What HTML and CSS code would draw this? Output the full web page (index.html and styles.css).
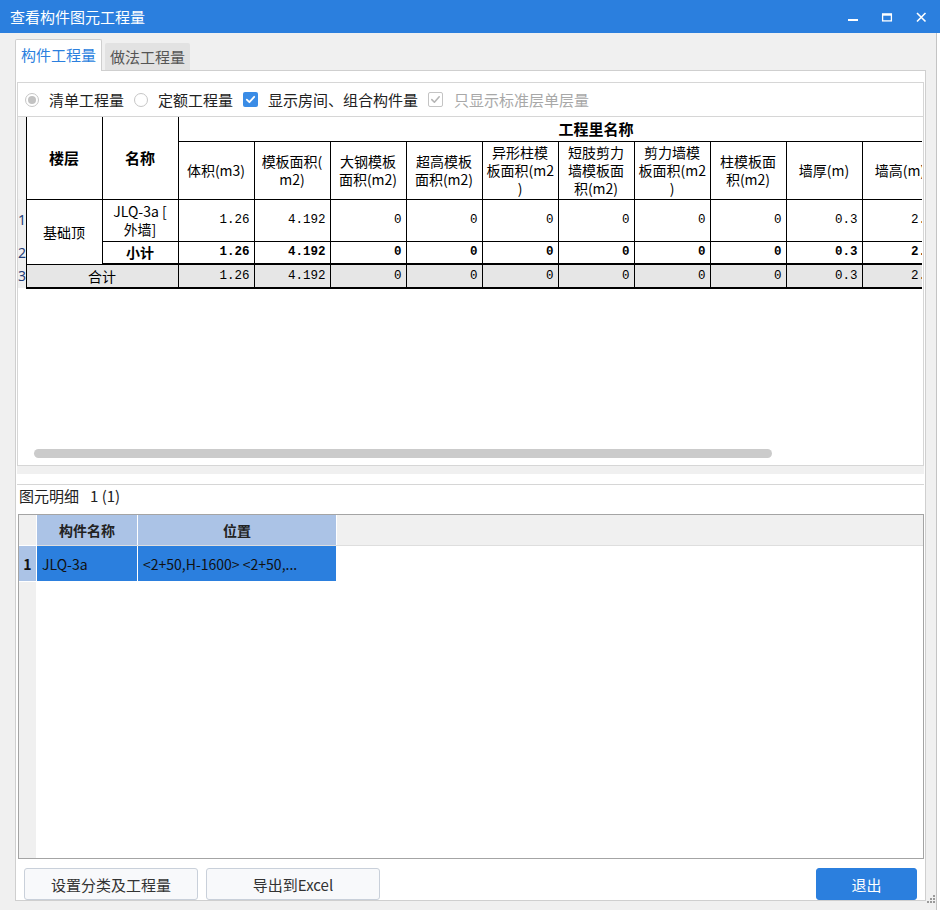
FILE: index.html
```html
<!DOCTYPE html>
<html lang="zh">
<head>
<meta charset="utf-8">
<title>查看构件图元工程量</title>
<link rel="stylesheet" href="styles.css">
</head>
<body>
<div class="titlebar">
  <div class="title">查看构件图元工程量</div>
  <div class="controls">
    <div class="wbtn"><svg width="12" height="12" viewBox="0 0 12 12"><rect x="1" y="8" width="10" height="2" fill="#fff"/></svg></div>
    <div class="wbtn"><svg width="12" height="12" viewBox="0 0 12 12"><rect x="1.6" y="3.1" width="8.8" height="6.8" fill="none" stroke="#fff" stroke-width="1.3"/><rect x="1" y="2.5" width="10" height="2.2" fill="#fff"/></svg></div>
    <div class="wbtn"><svg width="12" height="12" viewBox="0 0 12 12"><path d="M2 2 L10.5 10.5 M10.5 2 L2 10.5" stroke="#fff" stroke-width="1.6" fill="none"/></svg></div>
  </div>
</div>
<div class="frame">
  <div class="tabs">
    <div class="tab active">构件工程量</div>
    <div class="tab inactive">做法工程量</div>
  </div>
  <div class="panel">
    <div class="upper">
      <div class="opts">
        <label class="opt"><span class="radio checked"></span><span>清单工程量</span></label>
        <label class="opt"><span class="radio"></span><span>定额工程量</span></label>
        <label class="opt"><span class="cbox on"><svg width="15" height="15" viewBox="0 0 15 15"><path d="M3.8 7.6 L6.4 10.2 L11.2 4.8" stroke="#fff" stroke-width="1.8" fill="none" stroke-linecap="round" stroke-linejoin="round"/></svg></span><span>显示房间、组合构件量</span></label>
        <label class="opt dis"><span class="cbox off"><svg width="13" height="13" viewBox="0 0 13 13"><path d="M2.8 6.6 L5.4 9.2 L10.2 3.8" stroke="#b5b5b5" stroke-width="1.6" fill="none" stroke-linecap="round" stroke-linejoin="round"/></svg></span><span>只显示标准层单层量</span></label>
      </div>
      <div class="gridarea">
        <div class="tablewrap">
          <table class="grid">
            <colgroup>
              <col class="cg">
              <col class="cc"><col class="cc"><col class="cc"><col class="cc"><col class="cc"><col class="cc"><col class="cc"><col class="cc"><col class="cc"><col class="cc"><col class="cc"><col class="cc"><col class="cc">
            </colgroup>
            <tr class="h1">
              <td class="gut gh"></td>
              <th class="b top" rowspan="2">楼层</th>
              <th class="b top" rowspan="2">名称</th>
              <th class="b top" colspan="11">工程里名称</th>
            </tr>
            <tr class="h2">
              <td class="gut gh"></td>
              <th>体积(m3)</th>
              <th>模板面积(<br>m2)</th>
              <th>大钢模板<br>面积(m2)</th>
              <th>超高模板<br>面积(m2)</th>
              <th>异形柱模<br>板面积(m2<br>)</th>
              <th>短肢剪力<br>墙模板面<br>积(m2)</th>
              <th>剪力墙模<br>板面积(m2<br>)</th>
              <th>柱模板面<br>积(m2)</th>
              <th>墙厚(m)</th>
              <th>墙高(m)</th>
              <th></th>
            </tr>
            <tr class="r1">
              <td class="gut">1</td>
              <td rowspan="2" class="floor">基础顶</td>
              <td class="name">JLQ-3a [<br>外墙]</td>
              <td class="n">1.26</td><td class="n">4.192</td><td class="n">0</td><td class="n">0</td><td class="n">0</td><td class="n">0</td><td class="n">0</td><td class="n">0</td><td class="n">0.3</td><td class="n">2.1</td><td class="n"></td>
            </tr>
            <tr class="r2">
              <td class="gut">2</td>
              <td class="sub">小计</td>
              <td class="n">1.26</td><td class="n">4.192</td><td class="n">0</td><td class="n">0</td><td class="n">0</td><td class="n">0</td><td class="n">0</td><td class="n">0</td><td class="n">0.3</td><td class="n">2.1</td><td class="n"></td>
            </tr>
            <tr class="r3">
              <td class="gut">3</td>
              <td colspan="2" class="total">合计</td>
              <td class="n">1.26</td><td class="n">4.192</td><td class="n">0</td><td class="n">0</td><td class="n">0</td><td class="n">0</td><td class="n">0</td><td class="n">0</td><td class="n">0.3</td><td class="n">2.1</td><td class="n"></td>
            </tr>
          </table>
        </div>
        <div class="hscroll"></div>
      </div>
    </div>
    <div class="split"></div>
    <div class="lower">
      <div class="label"><span>图元明细</span><span class="cnt">1 (1)</span></div>
      <div class="lgrid">
        <div class="lgutter">
          <div class="lg-h"></div>
          <div class="lg-1">1</div>
        </div>
        <div class="lmain">
          <div class="lhead">
            <div class="lhc c1">构件名称</div>
            <div class="lhc c2">位置</div>
          </div>
          <div class="lrow">
            <div class="lc c1">JLQ-3a</div>
            <div class="lc c2">&lt;2+50,H-1600&gt; &lt;2+50,...</div>
          </div>
        </div>
      </div>
    </div>
    <div class="btns">
      <div class="btn w">设置分类及工程量</div>
      <div class="btn w">导出到Excel</div>
      <div class="btn primary">退出</div>
    </div>
  </div>
</div>
<div class="grip"><svg width="11" height="10" viewBox="0 0 11 10"><rect x="8" y="0" width="2" height="2" fill="#9a9a9a"/><rect x="5" y="3" width="2" height="2" fill="#9a9a9a"/><rect x="8" y="3" width="2" height="2" fill="#9a9a9a"/><rect x="2" y="6" width="2" height="2" fill="#9a9a9a"/><rect x="5" y="6" width="2" height="2" fill="#9a9a9a"/><rect x="8" y="6" width="2" height="2" fill="#9a9a9a"/></svg></div>
</body>
</html>
```

FILE: styles.css
```css
html, body {
  margin: 0;
  padding: 0;
}
body {
  width: 940px;
  height: 910px;
  overflow: hidden;
  background: #ffffff;
  font-family: "Noto Sans CJK SC", "Noto Sans", sans-serif;
  position: relative;
  color: #222;
}
.titlebar {
  width: 940px;
  height: 33px;
  background: #2b7fde;
  display: flex;
  align-items: center;
  color: #fff;
  font-size: 15px;
  box-sizing: border-box;
  padding-left: 10px;
}
.title {
  flex: 1;
  line-height: 20px;
}
.controls {
  display: flex;
  margin-right: 2px;
}
.wbtn {
  width: 34px;
  height: 33px;
  display: flex;
  align-items: center;
  justify-content: center;
}
.wbtn svg { display: block; }

.frame {
  width: 937px;
  height: 877px;
  box-sizing: border-box;
  background: #f0f0f0;
  border-right: 1px solid #c4c4c4;
  padding: 6px 0 0 15px;
}
.tabs {
  display: flex;
  align-items: flex-end;
  gap: 3px;
  height: 32px;
  margin-bottom: -1px;
  position: relative;
  z-index: 1;
}
.tab {
  font-size: 15px;
  box-sizing: border-box;
  display: flex;
  align-items: center;
  justify-content: center;
  line-height: 20px;
  border-radius: 2px 2px 0 0;
}
.tab.active {
  width: 87px;
  height: 32px;
  background: #fff;
  border: 1px solid #cfcfcf;
  border-bottom: none;
  color: #2b7fde;
  padding-bottom: 2px;
}
.tab.inactive {
  width: 85px;
  height: 27px;
  background: #e2e2e2;
  color: #555;
  margin-bottom: 1px;
}
.panel {
  width: 911px;
  height: 831px;
  box-sizing: border-box;
  border: 1px solid #cfcfcf;
  background: #fff;
  padding: 11px 1px 0 1px;
  display: flex;
  flex-direction: column;
}
.upper {
  height: 384px;
  flex: none;
  box-sizing: border-box;
  border: 1px solid #d6d6d6;
  display: flex;
  flex-direction: column;
}
.opts {
  height: 34px;
  flex: none;
  box-sizing: border-box;
  border-bottom: 1px solid #d6d6d6;
  display: flex;
  align-items: center;
  padding-left: 7px;
  font-size: 15px;
  line-height: 20px;
  color: #222;
}
.opt {
  display: flex;
  align-items: center;
  gap: 10px;
  margin-right: 10px;
}
.opt.dis { color: #a8a8a8; gap: 11px; }
.radio {
  width: 14px;
  height: 14px;
  box-sizing: border-box;
  border: 1px solid #c6c6c6;
  border-radius: 50%;
  background: #fff;
  display: flex;
  align-items: center;
  justify-content: center;
}
.radio.checked::after {
  content: "";
  width: 8px;
  height: 8px;
  border-radius: 50%;
  background: #c2c2c2;
}
.cbox {
  width: 15px;
  height: 15px;
  box-sizing: border-box;
  border-radius: 2px;
  display: flex;
  align-items: center;
  justify-content: center;
}
.cbox svg { display: block; }
.cbox.on { background: #3a8ce6; }
.cbox.off { border: 1px solid #c4c4c4; background: #fff; }

.gridarea {
  flex: 1;
  display: flex;
  flex-direction: column;
  min-height: 0;
}
.tablewrap {
  overflow: hidden;
  width: 904px;
}
table.grid {
  border-collapse: collapse;
  table-layout: fixed;
  width: 996px;
  font-size: 14px;
  line-height: 18px;
  color: #000;
}
col.cg { width: 8px; }
col.cc { width: 76px; }
table.grid th, table.grid td {
  border: 1px solid #000;
  padding: 0 4px;
  text-align: center;
  vertical-align: middle;
  font-weight: normal;
  overflow: hidden;
  white-space: nowrap;
}
table.grid th.b {
  font-weight: bold;
  font-size: 15px;
}
table.grid th.top { border-top: none; }
table.grid td.gut {
  border: none;
  border-right: 1px solid #000;
  padding: 0;
  background: #f0f0f0;
  color: #1f3d78;
  font-family: "Noto Sans", sans-serif;
  font-size: 14px;
  text-align: left;
}
table.grid td.gut.gh { background: #f3f3f3; }
tr.h1 { height: 24px; }
tr.h2 { height: 58px; }
tr.r1 { height: 42px; }
tr.r2 { height: 23px; }
tr.r3 { height: 24px; }
table.grid td.n {
  text-align: right;
  font-family: "Liberation Mono", monospace;
  font-size: 12.5px;
  padding-right: 4px;
}
tr.r2 td { border-bottom: 2px solid #000; }
tr.r2 td.n, tr.r2 td.sub { font-weight: bold; }
tr.r3 td { border-bottom: 2px solid #000; background: #e6e6e6; }
tr.r3 td.gut { background: #f0f0f0; border-bottom: none; }
.hscroll {
  margin: auto 0 7px 16px;
  width: 738px;
  height: 9px;
  border-radius: 5px;
  background: #cbcbcb;
  flex: none;
}
.split {
  height: 18px;
  flex: none;
  box-sizing: border-box;
  border-top: 8px solid #f0f0f0;
}
.lower {
  flex: none;
  border-top: 1px solid #d6d6d6;
  padding-left: 1px;
  display: flex;
  flex-direction: column;
}
.label {
  height: 29px;
  box-sizing: border-box;
  padding: 1px 0 0 1px;
  font-size: 15px;
  line-height: 20px;
  color: #222;
  display: flex;
}
.label .cnt { margin-left: 11px; }
.lgrid {
  height: 345px;
  box-sizing: border-box;
  border: 1px solid #a4a4a4;
  display: flex;
}
.lgutter {
  width: 18px;
  box-sizing: border-box;
  background: #f0f0f0;
  border-right: 1px solid #fff;
  display: flex;
  flex-direction: column;
}
.lg-h {
  height: 31px;
  box-sizing: border-box;
  border-bottom: 1px solid #fff;
}
.lg-1 {
  height: 36px;
  background: #abc3e6;
  font-weight: bold;
  font-size: 14px;
  color: #111;
  display: flex;
  align-items: center;
  justify-content: center;
  border-bottom: 1px solid #fff;
  box-sizing: border-box;
}
.lmain {
  flex: 1;
  display: flex;
  flex-direction: column;
}
.lhead {
  height: 31px;
  box-sizing: border-box;
  background: #f0f0f0;
  border-bottom: 1px solid #dedede;
  display: flex;
}
.lhc {
  background: #abc3e6;
  font-weight: bold;
  font-size: 14px;
  color: #222;
  display: flex;
  align-items: center;
  justify-content: center;
  border-right: 1px solid #fff;
  box-sizing: border-box;
}
.c1 { width: 101px; }
.c2 { width: 199px; }
.lrow {
  height: 36px;
  display: flex;
}
.lc {
  background: #2b7fde;
  color: #111;
  font-size: 14px;
  display: flex;
  align-items: center;
  padding-left: 5px;
  box-sizing: border-box;
  border-right: 1px solid #fff;
  border-bottom: 1px solid #fff;
  white-space: nowrap;
  overflow: hidden;
}
.btns {
  display: flex;
  margin-top: 9px;
  height: 32px;
  padding: 0 7px 0 7px;
  gap: 8px;
  flex: none;
}
.btn {
  height: 32px;
  box-sizing: border-box;
  border: 1px solid #c9d0da;
  border-radius: 3px;
  background: #f8f9fb;
  color: #333;
  font-size: 15px;
  display: flex;
  align-items: center;
  justify-content: center;
}
.btn.w { width: 174px; }
.btn.primary {
  width: 101px;
  margin-left: auto;
  background: #2b7fde;
  border-color: #2b7fde;
  color: #fff;
}
.grip {
  position: absolute;
  left: 925px;
  top: 895px;
  width: 11px;
  height: 10px;
}
.grip svg { display: block; }
```
